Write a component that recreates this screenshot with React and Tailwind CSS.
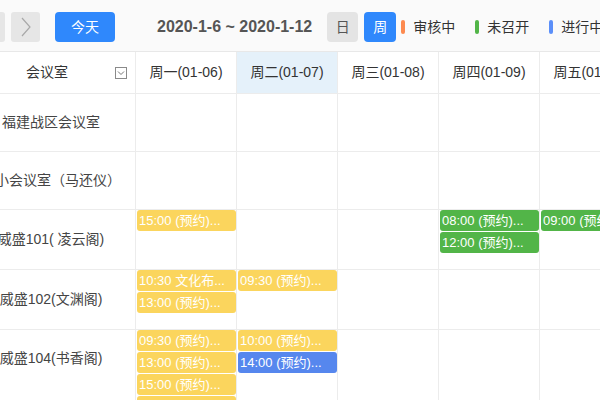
import React from 'react';

const FONT = '"Liberation Sans", "Noto Sans CJK SC", sans-serif';

const COLORS = {
  y: 'bg-[#fbd55d]',
  g: 'bg-[#52b548]',
  b: 'bg-[#5687ee]',
};

const DAYS = ['周一(01-06)', '周二(01-07)', '周三(01-08)', '周四(01-09)', '周五(01-10)', '周六(01-11)', '周日(01-12)'];

// rooms: name, row height, events per day index
const ROOMS = [
  { name: '福建战区会议室', h: 'h-[58px]', ev: {} },
  { name: '楼小会议室（马还仪）', h: 'h-[58px]', ev: {} },
  {
    name: '威盛101( 凌云阁)', h: 'h-[60px]',
    ev: { 0: [['y', '15:00 (预约)...']], 3: [['g', '08:00 (预约)...'], ['g', '12:00 (预约)...']], 4: [['g', '09:00 (预约)...']] },
  },
  {
    name: '威盛102(文渊阁)', h: 'h-[60px]',
    ev: { 0: [['y', '10:30 文化布...'], ['y', '13:00 (预约)...']], 1: [['y', '09:30 (预约)...']] },
  },
  {
    name: '威盛104(书香阁)', h: 'h-[110px]', top: true,
    ev: {
      0: [['y', '09:30 (预约)...'], ['y', '13:00 (预约)...'], ['y', '15:00 (预约)...'], ['y', '16:00 (预约)...']],
      1: [['y', '10:00 (预约)...'], ['b', '14:00 (预约)...']],
    },
  },
];

function Legend({ color, label }) {
  return (
    <div className="flex items-center">
      <span className={`w-[4px] h-[14px] rounded-full ${color}`} />
      <span className="ml-[8px] text-[14px] text-[#333]">{label}</span>
    </div>
  );
}

export default function App() {
  return (
    <div className="w-[600px] h-[400px] overflow-hidden bg-white" style={{ fontFamily: FONT }}>
      {/* ---- toolbar ---- */}
      <div className="flex items-center h-[52px] pt-[3px] bg-[#fafafa] border-b border-[#e8e8e8] whitespace-nowrap">
        <button className="-ml-[24px] w-[29px] h-[30px] rounded-[3px] bg-[#e6e6e6] shrink-0" />
        <button className="ml-[6px] w-[29px] h-[30px] rounded-[3px] bg-[#e6e6e6] flex items-center justify-center shrink-0">
          <svg width="10" height="20" viewBox="0 0 10 20"><polyline points="1,1 9,10 1,19" fill="none" stroke="#a8a8a8" strokeWidth="1.2" /></svg>
        </button>
        <button className="ml-[15px] w-[60px] h-[30px] rounded-[4px] bg-[#2f88fc] text-white text-[14px] shrink-0">今天</button>
        <div className="ml-[42px] text-[16px] font-bold text-[#555] shrink-0">2020-1-6 ~ 2020-1-12</div>
        <button className="ml-[15px] w-[31px] h-[30px] rounded-[4px] bg-[#e4e4e4] text-[#555] text-[14px] shrink-0">日</button>
        <button className="ml-[6px] w-[32px] h-[30px] rounded-[4px] bg-[#2f88fc] text-white text-[14px] shrink-0">周</button>
        <div className="ml-[5px] flex items-center gap-[20px] shrink-0">
          <Legend color="bg-[#fd8a4f]" label="审核中" />
          <Legend color="bg-[#52b548]" label="未召开" />
          <Legend color="bg-[#5b8ff9]" label="进行中" />
        </div>
      </div>

      {/* ---- week grid ---- */}
      <div className="-ml-[33px] w-max">
        <div className="flex h-[42px] border-b border-[#ececec]">
          <div className="relative w-[169px] border-r border-[#ececec] flex items-center justify-center pr-[8px] text-[14px] text-[#333]">
            会议室
            <span className="absolute right-[8px] top-[15px] w-[12px] h-[12px] border border-[#8a8a8a] flex items-center justify-center">
              <svg width="8" height="6" viewBox="0 0 8 6"><polyline points="1,1.5 4,4.5 7,1.5" fill="none" stroke="#777" strokeWidth="1" /></svg>
            </span>
          </div>
          {DAYS.map((d, i) => (
            <div key={d} className={`w-[101px] border-r border-[#ececec] flex items-center justify-center text-[14px] text-[#333] ${i === 1 ? 'bg-[#e5f1fa]' : ''}`}>
              {d}
            </div>
          ))}
        </div>

        {ROOMS.map((r) => (
          <div key={r.name} className={`flex ${r.h} border-b border-[#ececec]`}>
            <div className={`w-[169px] border-r border-[#ececec] flex justify-center text-[14px] text-[#444] whitespace-nowrap overflow-hidden ${r.top ? 'items-start pt-[18px]' : 'items-center'}`}>
              {r.name}
            </div>
            {DAYS.map((d, i) => (
              <div key={d} className="w-[101px] border-r border-[#ececec] flex flex-col gap-[1px] pl-[1px]">
                {(r.ev[i] || []).map(([c, t], k) => (
                  <div key={k} className={`h-[21px] rounded-[3px] ${COLORS[c]} text-white text-[13px] leading-[21px] pl-[2px] whitespace-nowrap overflow-hidden`}>
                    {t}
                  </div>
                ))}
              </div>
            ))}
          </div>
        ))}
      </div>
    </div>
  );
}
